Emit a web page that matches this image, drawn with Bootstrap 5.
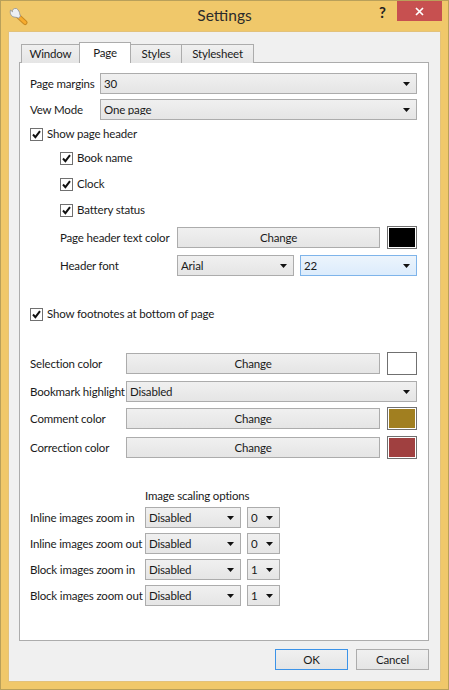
<!DOCTYPE html>
<html lang="en">
<head>
    <meta charset="UTF-8">
    <meta name="viewport" content="width=device-width, initial-scale=1.0">
    <title>Settings</title>
    <link href="https://cdn.jsdelivr.net/npm/bootstrap@5.3.3/dist/css/bootstrap.min.css" rel="stylesheet">
    <style>
        html, body { height: 100%; }
        body { margin: 0; overflow: hidden; background: #f0c86a; font-family: Lato, "Noto Sans", sans-serif; font-size: 11.5px; letter-spacing: -.17px; color: #1a1a1a; }
        .win-frame { width: 449px; height: 690px; border: 1px solid #b9a05a; background: #f0c86a; }
        .title-bar { height: 30px; padding-left: 8px; }
        .title-text { font-size: 15.5px; letter-spacing: 0; color: #2b2b2b; left: 0; right: 0; top: 3px; text-align: center; }
        .help-mark { top: 0; left: 378px; font-size: 15px; font-weight: 700; color: #222; }
        .close-box { top: 0; left: 396px; width: 45px; height: 20px; background: #c75050; }
        .client-area { width: 433px; height: 651px; margin-left: 7px; background: #f0f0f0; border: 1px solid #e3c27a; padding: 10px 12px 0 10px; }
        .tab-strip { height: 21px; padding-left: 2px; border: 0; position: relative; z-index: 1; margin-bottom: -1px; align-items: flex-end; flex-wrap: nowrap; }
        .tab-strip .nav-link { font-size: 11.5px; color: #1a1a1a; height: 19px; padding: 0; margin: 0 -1px 0 0; border: 1px solid #acacac; border-bottom: 0; border-radius: 0; background: linear-gradient(#f0f0f0, #e5e5e5); display: flex; align-items: center; justify-content: center; }
        .tab-strip .nav-link.active { height: 21px; background: #fff; border-color: #acacac; color: #1a1a1a; position: relative; }
        .tab-w1 { width: 59px; } .tab-w2 { width: 52px; } .tab-w3 { width: 52px; } .tab-w4 { width: 73px; }
        .page-pane { width: 410px; height: 579px; background: #fff; border: 1px solid #acacac; padding: 10px 11px 0 10px; }
        .set-row { display: flex; align-items: center; }
        .set-label { flex: none; white-space: nowrap; }
        .lb1 { width: 70px; } .lb2 { width: 96px; } .lb3 { width: 117px; } .lb4 { width: 115px; }
        .fake-select.form-select { font-size: 11.5px; letter-spacing: inherit; line-height: 1; color: #1a1a1a; height: 21px; min-height: 0; padding: 0 16px 0 3px; border: 1px solid #acacac; border-radius: 0; box-shadow: none;
            background: url("data:image/svg+xml,%3Csvg xmlns='http://www.w3.org/2000/svg' width='7' height='4'%3E%3Cpath d='M0 0h7L3.5 4z' fill='%23111'/%3E%3C/svg%3E") no-repeat right 6px center, linear-gradient(#f0f0f0, #e5e5e5); }
        .fake-select.is-focus { border-color: #7eb4ea; background: url("data:image/svg+xml,%3Csvg xmlns='http://www.w3.org/2000/svg' width='7' height='4'%3E%3Cpath d='M0 0h7L3.5 4z' fill='%23111'/%3E%3C/svg%3E") no-repeat right 6px center, linear-gradient(#ecf4fc, #dcecfc); }
        .sel-font { width: 117px; flex: none; }
        .sel-mode { width: 96px; flex: none; }
        .sel-num { width: 33px; flex: none; margin-left: 6px; }
        .sel-size { margin-left: 6px; }
        .flat-btn.btn { font-size: 11.5px; letter-spacing: inherit; color: #1a1a1a; padding: 0; border: 1px solid #acacac; border-radius: 0; background: linear-gradient(#f0f0f0, #e5e5e5); height: 21px; line-height: 1; }
        .color-swatch { flex: none; width: 30px; height: 23px; border: 1px solid #707070; outline: 1px solid #fff; outline-offset: -2px; margin-left: 7px; }
        .swatch-gold { background: #a17f20; }
        .swatch-red { background: #a04040; }
        .form-check.tick-row { display: flex; align-items: center; min-height: 20px; height: 20px; padding: 0; margin-bottom: 0; }
        .tick-row .form-check-input { float: none; flex: none; width: 13px; height: 13px; margin: 0 4px 0 0; border: 1px solid #707070; border-radius: 0; background-color: #fff; background-size: 11px 11px;
            background-image: url("data:image/svg+xml,%3Csvg xmlns='http://www.w3.org/2000/svg' viewBox='0 0 11 11'%3E%3Cpath d='M2 5.5l2.4 2.6L9 2.2' fill='none' stroke='%23111' stroke-width='2'/%3E%3C/svg%3E"); box-shadow: none; }
        .tick-row .form-check-label { white-space: nowrap; }
        .nest-30 { margin-left: 30px; }
        .sp3 { margin-top: 3px; } .sp4 { margin-top: 4px; } .sp5 { margin-top: 5px; } .sp6 { margin-top: 6px; }
        .sp28 { margin-top: 28px; } .sp29 { margin-top: 29px; }
        .scale-head { padding-left: 115px; height: 16px; line-height: 16px; }
        .dlg-foot { margin-top: 8px; width: 410px; justify-content: flex-end; gap: 8px; }
        .dlg-btn { width: 73px; }
        .dlg-btn.is-default { border-color: #3c93e8; }
    </style>
</head>
<body>
    <div class="win-frame position-relative">
        <div class="title-bar position-relative">
            <svg class="position-absolute" style="left:8px;top:6px" width="19" height="19" viewBox="0 0 19 19">
                <path d="M9 9l7 6.5" stroke="#c98a22" stroke-width="5" stroke-linecap="round"/>
                <path d="M9.5 9.5l6.5 6" stroke="#f7ab2e" stroke-width="3" stroke-linecap="round"/>
                <path d="M7.5 1.5C4.5 1 3 3 3.5 4.8L1.5 3C0.6 6 2 9.5 5 10c2 .4 3.2.2 4.5 1.2l2-2.2C10.5 7.5 11 6 9.8 4 9 2.7 8.3 2 7.5 1.5z" fill="#eceff2" stroke="#8b929a" stroke-width=".8"/>
            </svg>
            <div class="title-text position-absolute">Settings</div>
            <div class="help-mark position-absolute">?</div>
            <div class="close-box position-absolute d-flex align-items-center justify-content-center">
                <svg width="9" height="9" viewBox="0 0 9 9"><path d="M1 1l7 7M8 1L1 8" stroke="#fff" stroke-width="1.7"/></svg>
            </div>
        </div>
        <div class="client-area">
            <ul class="nav nav-tabs tab-strip">
                <li class="nav-item"><a class="nav-link tab-w1" href="#">Window</a></li>
                <li class="nav-item"><a class="nav-link tab-w2 active" href="#">Page</a></li>
                <li class="nav-item"><a class="nav-link tab-w3" href="#">Styles</a></li>
                <li class="nav-item"><a class="nav-link tab-w4" href="#">Stylesheet</a></li>
            </ul>
            <div class="page-pane">
                <div class="set-row">
                    <span class="set-label lb1">Page margins</span>
                    <select class="form-select fake-select"><option>30</option></select>
                </div>
                <div class="set-row sp5">
                    <span class="set-label lb1">Vew Mode</span>
                    <select class="form-select fake-select"><option>One page</option></select>
                </div>
                <div class="form-check tick-row sp4">
                    <input class="form-check-input" type="checkbox" checked>
                    <label class="form-check-label">Show page header</label>
                </div>
                <div class="form-check tick-row nest-30 sp4">
                    <input class="form-check-input" type="checkbox" checked>
                    <label class="form-check-label">Book name</label>
                </div>
                <div class="form-check tick-row nest-30 sp6">
                    <input class="form-check-input" type="checkbox" checked>
                    <label class="form-check-label">Clock</label>
                </div>
                <div class="form-check tick-row nest-30 sp6">
                    <input class="form-check-input" type="checkbox" checked>
                    <label class="form-check-label">Battery status</label>
                </div>
                <div class="set-row nest-30 sp6">
                    <span class="set-label lb3">Page header text color</span>
                    <button class="btn flat-btn flex-grow-1">Change</button>
                    <div class="color-swatch bg-black"></div>
                </div>
                <div class="set-row nest-30 sp6">
                    <span class="set-label lb3">Header font</span>
                    <select class="form-select fake-select sel-font"><option>Arial</option></select>
                    <select class="form-select fake-select is-focus sel-size"><option>22</option></select>
                </div>
                <div class="form-check tick-row sp28">
                    <input class="form-check-input" type="checkbox" checked>
                    <label class="form-check-label">Show footnotes at bottom of page</label>
                </div>
                <div class="set-row sp28">
                    <span class="set-label lb2">Selection color</span>
                    <button class="btn flat-btn flex-grow-1">Change</button>
                    <div class="color-swatch bg-white"></div>
                </div>
                <div class="set-row sp6">
                    <span class="set-label lb2">Bookmark highlight</span>
                    <select class="form-select fake-select"><option>Disabled</option></select>
                </div>
                <div class="set-row sp5">
                    <span class="set-label lb2">Comment color</span>
                    <button class="btn flat-btn flex-grow-1">Change</button>
                    <div class="color-swatch swatch-gold"></div>
                </div>
                <div class="set-row sp6">
                    <span class="set-label lb2">Correction color</span>
                    <button class="btn flat-btn flex-grow-1">Change</button>
                    <div class="color-swatch swatch-red"></div>
                </div>
                <div class="scale-head sp29">Image scaling options</div>
                <div class="set-row sp3">
                    <span class="set-label lb4">Inline images zoom in</span>
                    <select class="form-select fake-select sel-mode"><option>Disabled</option></select>
                    <select class="form-select fake-select sel-num"><option>0</option></select>
                </div>
                <div class="set-row sp5">
                    <span class="set-label lb4">Inline images zoom out</span>
                    <select class="form-select fake-select sel-mode"><option>Disabled</option></select>
                    <select class="form-select fake-select sel-num"><option>0</option></select>
                </div>
                <div class="set-row sp5">
                    <span class="set-label lb4">Block images zoom in</span>
                    <select class="form-select fake-select sel-mode"><option>Disabled</option></select>
                    <select class="form-select fake-select sel-num"><option>1</option></select>
                </div>
                <div class="set-row sp5">
                    <span class="set-label lb4">Block images zoom out</span>
                    <select class="form-select fake-select sel-mode"><option>Disabled</option></select>
                    <select class="form-select fake-select sel-num"><option>1</option></select>
                </div>
            </div>
            <div class="d-flex dlg-foot">
                <button class="btn flat-btn dlg-btn is-default">OK</button>
                <button class="btn flat-btn dlg-btn">Cancel</button>
            </div>
        </div>
    </div>
    <script src="https://cdn.jsdelivr.net/npm/bootstrap@5.3.3/dist/js/bootstrap.bundle.min.js"></script>
</body>
</html>
